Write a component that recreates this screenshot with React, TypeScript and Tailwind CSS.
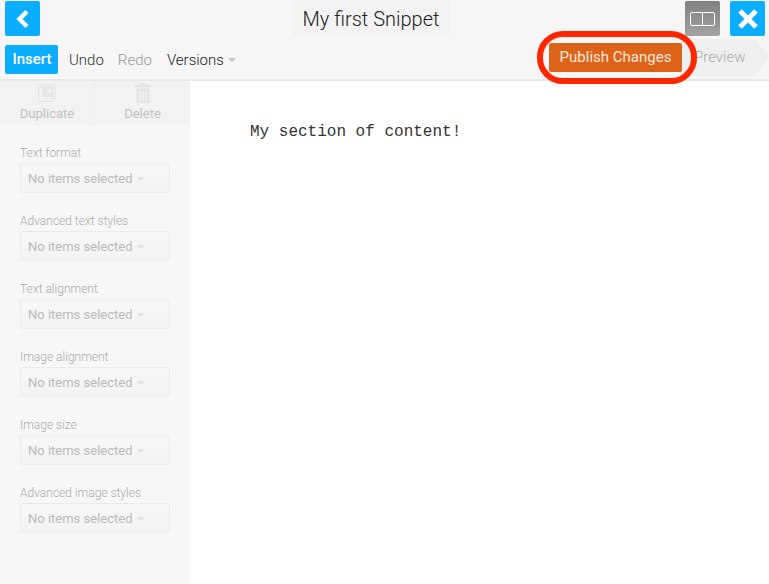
const groups = [
  "Text format",
  "Advanced text styles",
  "Text alignment",
  "Image alignment",
  "Image size",
  "Advanced image styles",
];

function DuplicateIcon() {
  return (
    <svg width="18" height="18" viewBox="0 0 18 18" fill="none" className="text-[#e4e4e4]">
      <rect x="3.500" y="0.500" width="14" height="14" stroke="currentColor" />
      <rect x="0.500" y="3.500" width="14" height="14" fill="#f2f2f2" stroke="currentColor" />
      <rect x="4.500" y="2" width="11" height="11" fill="currentColor" />
      <path d="M8 10l4-4M8.500 5.500H12.500V9.500" stroke="#f2f2f2" strokeWidth="1.600" />
    </svg>
  );
}

function TrashIcon() {
  return (
    <svg width="16" height="20" viewBox="0 0 16 20" className="text-[#e4e4e4]">
      <path
        d="M5.500 0h5l.8 2H16v2.500H0V2h4.700zM1.500 5.500h13V20h-13zM4.500 8v9.500h1.500V8zM7.250 8v9.500h1.500V8zM10 8v9.500h1.500V8z"
        fill="currentColor"
        fillRule="evenodd"
      />
    </svg>
  );
}

function Caret({ color }: { color: string }) {
  return <span className={`ml-1 h-0 w-0 border-x-4 border-t-4 border-x-transparent ${color}`} />;
}

export default function App() {
  return (
    <div className="relative flex h-[584px] w-[769px] flex-col overflow-hidden bg-white font-['Roboto',sans-serif]">
      <header className="z-10 h-[81px] shrink-0 border-b-2 border-[#e8e8e8] bg-[#f6f6f6]">
        <div className="flex h-[36px] items-start justify-between pl-[5px] pr-[4px] pt-px">
          <button className="flex h-[35px] w-[35px] items-center justify-center rounded-[2px] bg-[#0badff]">
            <svg width="15" height="20" viewBox="0 0 15 20">
              <path d="M12 2.500 4.500 10l7.500 7.500" fill="none" stroke="#fff" strokeWidth="4.500" />
            </svg>
          </button>
          <div className="ml-[252px] flex h-[35px] w-[158px] items-center justify-center rounded-[3px] bg-[#f3f3f3] text-[20px] font-light text-[#222]">
            My first Snippet
          </div>
          <div className="ml-auto flex gap-[10px]">
            <button className="flex h-[35px] w-[35px] items-center justify-center rounded-[2px] bg-gradient-to-b from-[#7f7f7f] to-[#a3a3a3]">
              <span className="flex h-[14px] w-[25px] rounded-[2px] border border-white">
                <span className="w-1/2 border-r border-white" />
              </span>
            </button>
            <button className="flex h-[35px] w-[35px] items-center justify-center rounded-[2px] bg-[#0badff]">
              <svg width="22" height="22" viewBox="0 0 22 22">
                <path d="M3 3l16 16M19 3 3 19" stroke="#fff" strokeWidth="5" />
              </svg>
            </button>
          </div>
        </div>
        <div className="flex h-[43px] items-center pl-[5px]">
          <button className="mt-[3px] h-[29px] w-[53px] rounded-[2px] bg-[#0badff] pl-px pt-px text-[15px] font-medium text-white">
            Insert
          </button>
          <span className="mt-[5px] ml-[11px] text-[15px] font-light text-[#333]">Undo</span>
          <span className="mt-[5px] ml-[14px] text-[15px] font-light text-[#999]">Redo</span>
          <span className="mt-[5px] ml-[15px] flex items-center text-[15px] font-light text-[#222]">
            Versions
            <Caret color="border-t-[#c4c4c4]" />
          </span>
          <div className="ml-auto flex h-[37px] items-center">
            <button className="z-10 h-[29px] w-[133px] rounded-[2px] bg-[#dd6319] text-[15px] text-[#f9e9dc]">
              Publish Changes
            </button>
            <div className="-ml-[2px] flex h-[37px] w-[89px] items-center bg-[#efefef] pl-[14px] text-[15px] font-light text-[#aaa] [clip-path:polygon(0_0,76px_0,100%_50%,76px_100%,0_100%)]">
              Preview
            </div>
          </div>
        </div>
      </header>

      <div className="flex min-h-0 flex-1">
        <aside className="w-[190px] shrink-0 bg-[#f7f7f7]">
          <div className="flex h-[44px] bg-[#f2f2f2] text-[13px] text-[#c0c0c0]">
            <div className="flex w-[95px] flex-col items-center border-r border-[#ececec] pt-[3px]">
              <DuplicateIcon />
              <span className="mt-[4px] leading-[15px]">Duplicate</span>
            </div>
            <div className="flex w-[95px] flex-col items-center pt-[2px]">
              <TrashIcon />
              <span className="mt-[3px] leading-[15px]">Delete</span>
            </div>
          </div>
          <div className="flex flex-col gap-[21px] pl-[20px] pt-[21px]">
            {groups.map((label) => (
              <div key={label}>
                <div className="mb-[2px] h-[15px] text-[12px] leading-[15px] font-light text-[#aaa]">{label}</div>
                <div className="flex h-[30px] w-[150px] items-center rounded-[2px] border border-[#ebebeb] bg-gradient-to-b from-[#f7f7f7] to-[#f3f3f3] pl-[7px] pt-[2px] text-[13px] text-[#bababa]">
                  No items selected
                  <Caret color="border-t-[#e2e2e2]" />
                </div>
              </div>
            ))}
          </div>
        </aside>
        <main className="flex-1 pl-[60px] pt-[41px] font-['Liberation_Mono',monospace] text-[16px] leading-[20px] text-[#333]">
          My section of content!
        </main>
      </div>

      <div className="pointer-events-none absolute left-[537px] top-[31px] z-20 h-[53px] w-[160px] rounded-[26px] border-[6px] border-[#ff2600]" />
    </div>
  );
}
